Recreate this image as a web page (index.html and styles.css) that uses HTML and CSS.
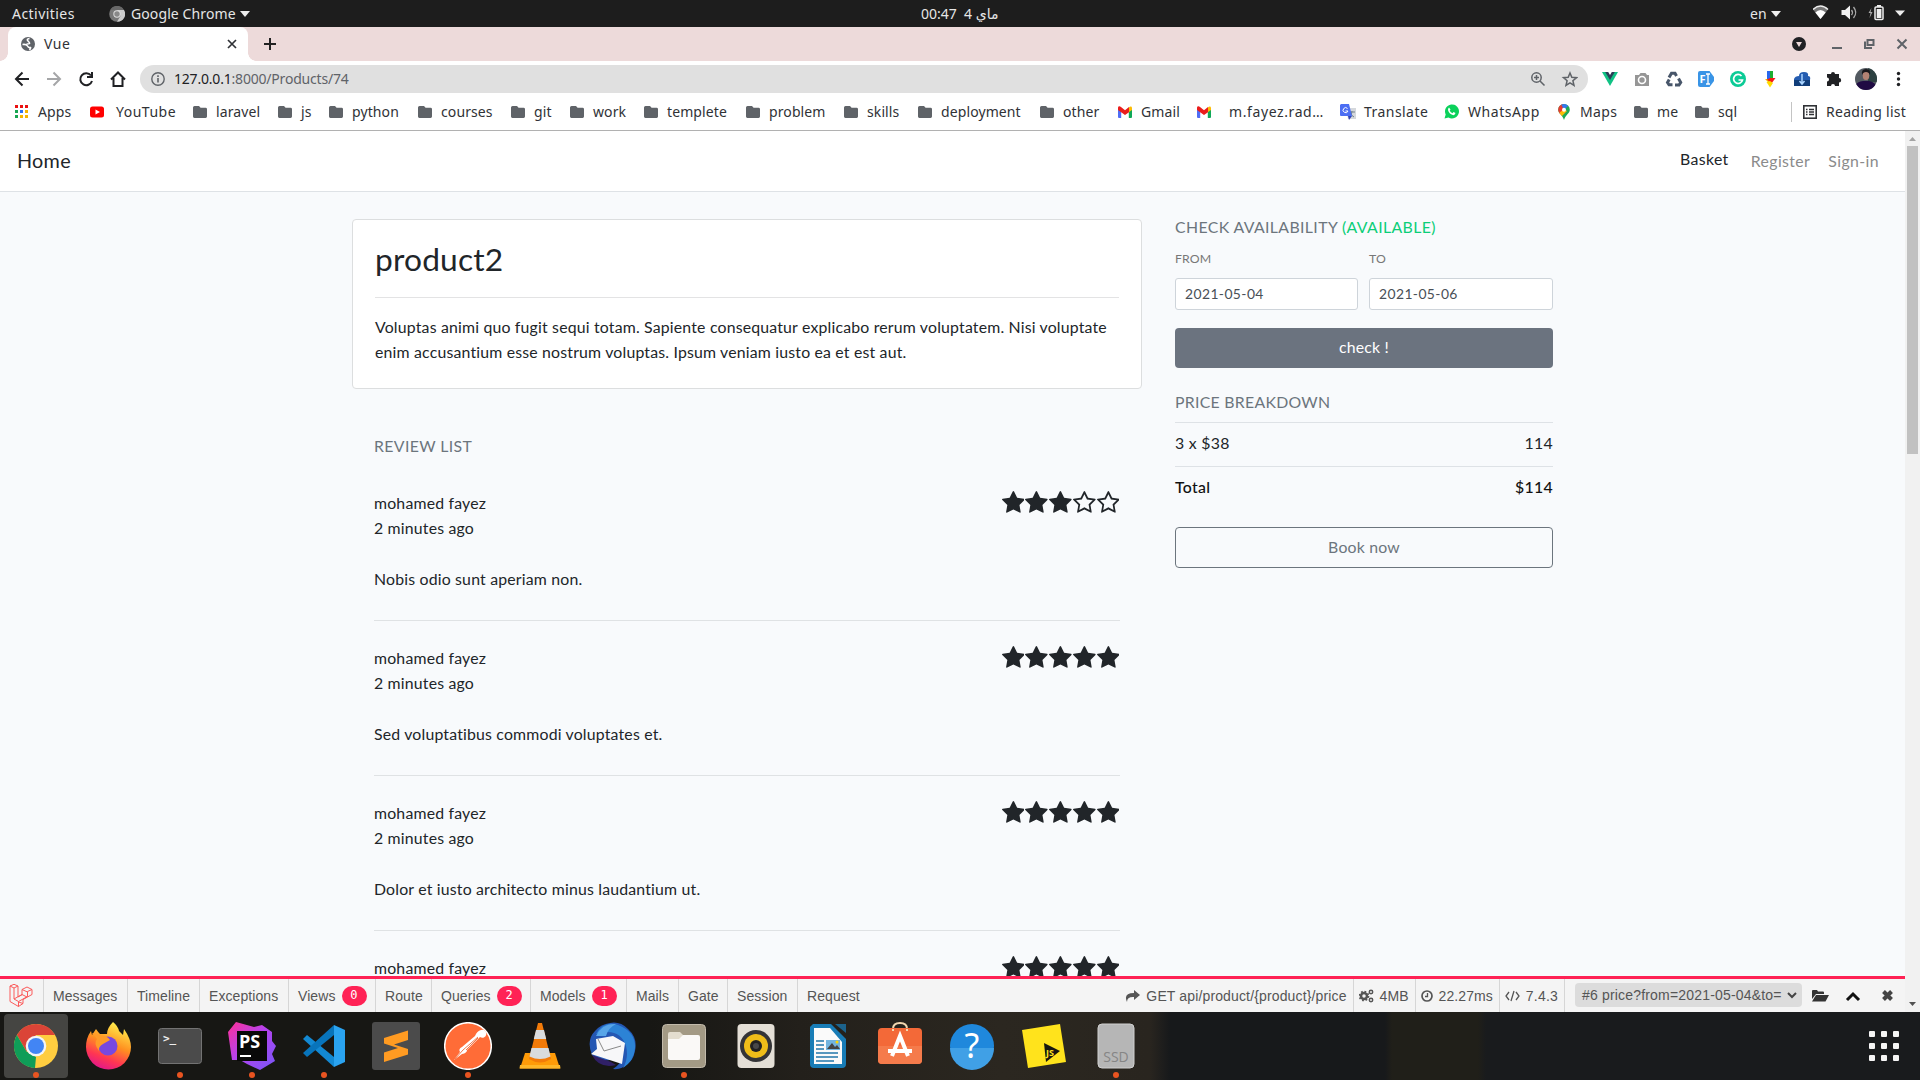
FILE: index.html
```html
<!DOCTYPE html>
<html lang="en">
<head>
<meta charset="utf-8">
<title>Vue</title>
<link rel="stylesheet" href="styles.css">
</head>
<body>
<svg class="sprite" aria-hidden="true">
  <symbol id="folder" viewBox="0 0 14 12"><path fill="#5f6368" d="M1.5 0H6l1.6 1.8h5A1.4 1.4 0 0 1 14 3.2v7.4a1.4 1.4 0 0 1-1.4 1.4H1.4A1.4 1.4 0 0 1 0 10.600V1.500A1.500 1.500 0 0 1 1.500 0z"/></symbol>
  <symbol id="gmail" viewBox="0 0 14 12"><path fill="#4f6df5" d="M0 2l3.200 2.500V12H1a1 1 0 0 1-1-1z"/><path fill="#0fa958" d="M14 2l-3.200 2.500V12H13a1 1 0 0 0 1-1z"/><path fill="#fbbc04" d="M10.800 1.500C12.500-.2 14 .5 14 2v2l-3.200 2.300z"/><path fill="#ea1c1c" d="M0 2C0 .3 1.500-.2 3 1l4 3.200L11 1v5.200L7 9 0 4z"/></symbol>
  <symbol id="star" viewBox="0 0 1664 1600"><path d="M1664 615q0 22-26 48l-363 354 86 500q1 7 1 20 0 21-10.500 35.500T1321 1587q-19 0-40-12l-449-236-449 236q-22 12-40 12-21 0-31.500-14.500T301 1537q0-6 2-20l86-500L25 663Q0 636 0 615q0-37 56-46l502-73L783 41q19-41 49-41t49 41l225 455 502 73q56 9 56 46z"/></symbol>
  <symbol id="star-o" viewBox="0 0 1664 1600"><path fill-rule="evenodd" d="M1137 968l306-297-422-62-189-382-189 382-422 62 306 297-73 421 378-199 377 199zM1664 615q0 22-26 48l-363 354 86 500q1 7 1 20 0 50-41 50-19 0-40-12l-449-236-449 236q-22 12-40 12-21 0-31.500-14.500T301 1537q0-6 2-20l86-500L25 663Q0 636 0 615q0-37 56-46l502-73L783 41q19-41 49-41t49 41l225 455 502 73q56 9 56 46z"/></symbol>
</svg>

<header class="topbar">
  <span class="activities">Activities</span>
  <svg class="app-icon" width="16" height="16" viewBox="0 0 16 16"><circle cx="8" cy="8" r="7.800" fill="#777"/><path d="M8 4h7a7.800 7.800 0 0 1-7 11.800L11.500 10z" fill="#ccc"/><path d="M1.200 4A7.800 7.800 0 0 1 15 4H8z" fill="#686868"/><circle cx="8" cy="8" r="3.700" fill="#ddd"/><circle cx="8" cy="8" r="2.700" fill="#888"/></svg>
  <span class="app-name">Google Chrome</span>
  <svg class="caret" width="10" height="6"><path d="M0 0h10L5 6z" fill="#eee"/></svg>
  <span class="clock">00:47&nbsp; ماي 4</span>
  <span class="lang">en</span>
  <svg class="caret" width="10" height="6"><path d="M0 0h10L5 6z" fill="#eee"/></svg>
  <svg class="tray" width="100" height="20" viewBox="0 0 100 20"><path d="M0 6.500Q7.500-.5 15 6.500L7.500 16z" fill="#777"/><path d="M0 6.500Q7.500-.5 15 6.500" fill="none" stroke="#eee" stroke-width="1.500"/><path d="M2.300 9.500Q7.500 4.500 12.700 9.500L7.500 16z" fill="#fff"/><path d="M28.500 7h3.500l5-4.500v14L32 12h-3.500z" fill="#f2f2f2"/><path d="M38.500 7q2 2.500 0 5M40.500 4q4.500 5.500 0 11" fill="none" stroke="#aaa" stroke-width="1.300"/><path d="M58.500 5l-3 5h2l-1 5 3-6h-2z" fill="#aaa"/><rect x="62" y="4" width="8" height="12.500" rx="1" fill="none" stroke="#eee" stroke-width="1.500"/><path d="M64 2h4v2h-4zM63.700 6h4.700v9h-4.700z" fill="#eee"/><path d="M82 7.500h10l-5 5.500z" fill="#eee"/></svg>
</header>

<div class="tabstrip">
  <div class="tab">
    <svg width="16" height="16" viewBox="0 0 16 16"><circle cx="8" cy="8" r="7" fill="#5f6368"/><path d="M9.500 2.500Q6 3 8 5t1.500 2.500-3 .5" fill="none" stroke="#fff" stroke-width="1.600"/><path d="M2.500 8.500q4-.5 5 1.500t2.500 1.500-.5 2.500" fill="none" stroke="#fff" stroke-width="1.600"/></svg>
    <span>Vue</span>
    <svg class="tab-close" width="10" height="10"><path d="M1 1l8 8M9 1L1 9" stroke="#303236" stroke-width="1.700"/></svg>
  </div>
  <svg class="newtab" width="12" height="12"><path d="M6 0v12M0 6h12" stroke="#222" stroke-width="2"/></svg>
  <svg class="winctl" width="120" height="16" viewBox="0 0 120 16"><circle cx="8" cy="8" r="7" fill="#202124"/><path d="M5 6h6l-3 5z" fill="#eddada"/><path d="M41 12h10" stroke="#5f6368" stroke-width="2"/><path d="M76.500 4h6v5h-6zM74 5.500V12h7" fill="none" stroke="#5f6368" stroke-width="2"/><path d="M106.500 3.500l9 9M115.500 3.500l-9 9" stroke="#5f6368" stroke-width="2"/></svg>
</div>

<div class="toolbar">
  <svg class="navicons" width="118" height="18" viewBox="0 0 118 18"><g fill="none" stroke-width="2"><path d="M15 9H2M8.500 2.500L2 9l6.500 6.500" stroke="#202124"/><path d="M33 9h13M39.500 2.500L46 9l-6.500 6.500" stroke="#a5a6a8"/><path d="M77 5.500A6 6 0 1 0 78 11M78 2v5h-5" stroke="#202124"/><path d="M97 9.500l7-7 7 7M99.500 8v8h9V8" stroke="#202124"/></g></svg>
  <div class="url">
    <svg width="14" height="14"><circle cx="7" cy="7" r="6.200" fill="none" stroke="#5f6368" stroke-width="1.400"/><path d="M7 6v4.500M7 3.300v1.600" stroke="#5f6368" stroke-width="1.600"/></svg>
    <span class="addr"><b>127.0.0.1</b>:8000/Products/74</span>
    <svg class="url-actions" width="48" height="16" viewBox="0 0 48 16"><g fill="none" stroke="#5f6368" stroke-width="1.500"><circle cx="6.500" cy="6.500" r="4.700"/><path d="M10 10l4.500 4.500M4 6.500h5M6.500 4v5"/><path d="M40 2l1.800 4.300 4.700.4-3.600 3 1.100 4.600-4-2.500-4 2.500 1.100-4.600-3.600-3 4.700-.4z"/></g></svg>
  </div>
  <svg class="exts" width="310" height="24" viewBox="0 0 310 24">
    <path d="M0 5h16L8 19z" fill="#10c284"/><path d="M3.200 5h9.600L8 13z" fill="#2c3e57"/><path d="M6.200 5h3.600L8 8z" fill="#fff"/>
    <path d="M33 8h4l1.500-2h5L45 8h2v11H33z" fill="#969696"/><circle cx="40" cy="13" r="3.500" fill="#969696" stroke="#fff" stroke-width="1.600"/>
    <g fill="none" stroke="#48566a" stroke-width="3"><path d="M67 10.500l2.500-4.300h3.500l1.500 2.800"/><path d="M76.500 11.500l2.200 4-1.700 2.500h-4"/><path d="M70.500 17.800H67l-1.500-2.300 1.700-3"/></g>
    <path d="M98 4h9.500l4.500 6v4l-4.500 6H98q-2 0-2-2V6q0-2 2-2z" fill="#3994e6"/><text x="97.500" y="16" class="ext-f">F</text><path d="M104 7h4M106 7v10M104 17h4" stroke="#fff" stroke-width="1.300"/>
    <circle cx="136" cy="12" r="8" fill="#0bcb96"/><path d="M139.500 9a4.500 4.500 0 1 0 1 4h-4" fill="none" stroke="#fff" stroke-width="1.700"/>
    <path d="M165 4h3v9h-3z" fill="#2867ec"/><path d="M168 4h3v8h-3z" fill="#1dad32"/><path d="M163 12h5v4l-2-1z" fill="#f0b400"/><path d="M165 12.500l3-1.500h5.500l-4 5.500z" fill="#f51919"/><path d="M164.500 15l3.500-1 3 2-3 4.500z" fill="#ffdb00"/>
    <path d="M192 12q1-3 5-3 0-4 5-4t4 4q3 0 2 4v6h-16z" fill="#255db1"/><path d="M192 13h16v6h-16z" fill="#103d79"/><path d="M200 7v10M197.500 14l2.500 3 2.500-3" fill="none" stroke="#a9d4ff" stroke-width="1.500"/>
    <path d="M225 7h4a2 2 0 1 1 4 0h4v4a2.200 2.200 0 1 1 0 4.400V19h-4a2 2 0 1 0-4 0h-4v-4.400a2 2 0 1 0 0-4z" fill="#202124"/>
    <clipPath id="av"><circle cx="264" cy="12" r="11"/></clipPath><g clip-path="url(#av)"><path d="M253 1h22v22h-22z" fill="#535a61"/><path d="M266 1h9v14h-9z" fill="#2d4141"/><path d="M252 24q0-9 9-10h6q8 1 8 10z" fill="#200b43"/><ellipse cx="264" cy="8.500" rx="3.300" ry="4.500" fill="#b38273"/><path d="M260 8q-1-6 4-6t4 6q-1-3-4-3t-4 3z" fill="#19171b"/></g>
    <g fill="#202124"><circle cx="296.500" cy="6.500" r="1.700"/><circle cx="296.500" cy="12" r="1.700"/><circle cx="296.500" cy="17.500" r="1.700"/></g>
  </svg>
</div>

<nav class="bookmarks">
  <a><svg width="14" height="14"><path d="M0 0h3v3H0zM5 0h3v3H5zM10 0h3v3h-3z" fill="#ea1111"/><path d="M0 5h3v3H0zM0 10h3v3H0z" fill="#18a552"/><path d="M5 5h3v3H5z" fill="#2d72f5"/><path d="M10 5h3v3h-3zM5 10h3v3H5zM10 10h3v3h-3z" fill="#f6b500"/></svg>Apps</a>
  <a class="wide"><svg width="14" height="12"><rect width="14" height="11" y=".5" rx="2.500" fill="#f00"/><path d="M5.500 3.500v5L10 6z" fill="#fff"/></svg>YouTube</a>
  <a><svg width="14" height="12"><use href="#folder"/></svg>laravel</a>
  <a><svg width="14" height="12"><use href="#folder"/></svg>js</a>
  <a><svg width="14" height="12"><use href="#folder"/></svg>python</a>
  <a><svg width="14" height="12"><use href="#folder"/></svg>courses</a>
  <a><svg width="14" height="12"><use href="#folder"/></svg>git</a>
  <a><svg width="14" height="12"><use href="#folder"/></svg>work</a>
  <a><svg width="14" height="12"><use href="#folder"/></svg>templete</a>
  <a><svg width="14" height="12"><use href="#folder"/></svg>problem</a>
  <a><svg width="14" height="12"><use href="#folder"/></svg>skills</a>
  <a><svg width="14" height="12"><use href="#folder"/></svg>deployment</a>
  <a><svg width="14" height="12"><use href="#folder"/></svg>other</a>
  <a><svg width="14" height="12"><use href="#gmail"/></svg>Gmail</a>
  <a class="wider"><svg width="14" height="12"><use href="#gmail"/></svg>m.fayez.rad…</a>
  <a class="near"><svg width="16" height="16"><path d="M6 4h10v11H8z" fill="#d5d8dc"/><path d="M9 8h6M12 7q0 5-3 6M10 9q2 3 4 4" fill="none" stroke="#71808b"/><path d="M1 0h8l3 12H1a1 1 0 0 1-1-1V1z" fill="#4c6ef3"/><path d="M8 12h4l-3 4z" fill="#3244b7"/><path d="M7.500 4.500A2.500 2.500 0 1 0 8 7H5.500" fill="none" stroke="#fff"/></svg>Translate</a>
  <a class="whatsapp"><svg width="15" height="15"><path d="M.5 14.500l1.200-4A7 7 0 1 1 4.500 13.500z" fill="#0bd15b"/><path d="M5 3.500l1.500 2-.8 1.300q1 1.800 2.800 2.500l1-1.200 2 1q-.5 2.400-2.700 2Q5 10 4 6q0-2 1-2.500z" fill="#fff"/></svg>WhatsApp</a>
  <a class="maps"><svg width="12" height="16"><clipPath id="pin"><path d="M6 0a5.800 5.800 0 0 1 5.800 6C11.800 9 7.500 11 6 16 4.500 11 .2 9 .2 6A5.800 5.800 0 0 1 6 0z"/></clipPath><g clip-path="url(#pin)"><path d="M0 0h12v16H0z" fill="#1da855"/><path d="M0 0h5l2 5-5 6H0z" fill="#e63b2f"/><path d="M3 0h9L6 6z" fill="#3578ed"/><path d="M0 10l6-5 3 2-6 6z" fill="#fbbc04"/></g><circle cx="6" cy="5.800" r="2" fill="#fff"/></svg>Maps</a>
  <a><svg width="14" height="12"><use href="#folder"/></svg>me</a>
  <a><svg width="14" height="12"><use href="#folder"/></svg>sql</a>
  <a class="reading"><svg width="14" height="14"><rect x=".8" y=".8" width="12.400" height="12.400" fill="none" stroke="#303236" stroke-width="1.600"/><path d="M3 4.500h1.500M3 7h1.500M3 9.500h1.500M6 4.500h5M6 7h5M6 9.500h5" stroke="#303236" stroke-width="1.300"/></svg>Reading list</a>
</nav>

<div class="viewport">
  <div class="page">
    <nav class="navbar">
      <span class="brand">Home</span>
      <span class="basket">Basket</span>
      <span class="link register">Register</span>
      <span class="link">Sign-in</span>
    </nav>
    <main class="content">
      <section class="left">
        <article class="card">
          <h2>product2</h2>
          <p>Voluptas animi quo fugit sequi totam. Sapiente consequatur explicabo rerum voluptatem. Nisi voluptate<br>enim accusantium esse nostrum voluptas. Ipsum veniam iusto ea et est aut.</p>
        </article>
        <div class="reviews">
          <h6>REVIEW LIST</h6>
          <div class="review"><div class="meta"><span>mohamed fayez<br>2 minutes ago</span><span class="stars"><svg><use href="#star"/></svg><svg><use href="#star"/></svg><svg><use href="#star"/></svg><svg><use href="#star-o"/></svg><svg><use href="#star-o"/></svg></span></div><p>Nobis odio sunt aperiam non.</p></div>
          <div class="review"><div class="meta"><span>mohamed fayez<br>2 minutes ago</span><span class="stars"><svg><use href="#star"/></svg><svg><use href="#star"/></svg><svg><use href="#star"/></svg><svg><use href="#star"/></svg><svg><use href="#star"/></svg></span></div><p>Sed voluptatibus commodi voluptates et.</p></div>
          <div class="review"><div class="meta"><span>mohamed fayez<br>2 minutes ago</span><span class="stars"><svg><use href="#star"/></svg><svg><use href="#star"/></svg><svg><use href="#star"/></svg><svg><use href="#star"/></svg><svg><use href="#star"/></svg></span></div><p>Dolor et iusto architecto minus laudantium ut.</p></div>
          <div class="review"><div class="meta"><span>mohamed fayez</span><span class="stars"><svg><use href="#star"/></svg><svg><use href="#star"/></svg><svg><use href="#star"/></svg><svg><use href="#star"/></svg><svg><use href="#star"/></svg></span></div></div>
        </div>
      </section>
      <aside class="side">
        <h6>CHECK AVAILABILITY <span class="ok">(AVAILABLE)</span></h6>
        <div class="dates">
          <div><label>FROM</label><div class="input">2021-05-04</div></div>
          <div><label>TO</label><div class="input">2021-05-06</div></div>
        </div>
        <div class="btn solid">check !</div>
        <h6 class="price">PRICE BREAKDOWN</h6>
        <div class="row"><span>3 x $38</span><span>114</span></div>
        <div class="row total"><span>Total</span><span>$114</span></div>
        <div class="btn outline">Book now</div>
      </aside>
    </main>
    <div class="debugbar">
      <span class="logo"><svg width="24" height="24" viewBox="0 0 24 24" fill="none" stroke="#fb5a5a" stroke-width="1"><path d="M1 2l4-1.700L9 2v11l4-2.300V5.500L18 3l5 2.500v5L14 15.500v4L9.500 22.500 1 17.500zM1 2l4 2 4-2M5 4v11l4.500 2.500 9-5V7.500l4.500-2M13 5.500l5.500 2.500M9.500 17.500v5M5 15l8-4.500 5 2.500M9.500 18l4.500 1.500"/></svg></span>
      <span style="width:84px">Messages</span>
      <span style="width:72px">Timeline</span>
      <span style="width:89px">Exceptions</span>
      <span style="width:87px">Views<i>0</i></span>
      <span style="width:56px">Route</span>
      <span style="width:99px">Queries<i>2</i></span>
      <span style="width:96px">Models<i>1</i></span>
      <span style="width:52px">Mails</span>
      <span style="width:49px">Gate</span>
      <span style="width:70px">Session</span>
      <span class="last">Request</span>
      <span class="info route"><svg width="15" height="14" viewBox="0 0 15 14"><path d="M9 1l6 5-6 5V8Q2 7.500 2 13-2 4 9 4z" fill="#555"/></svg>GET api/product/{product}/price</span>
      <span class="info"><svg width="15" height="14" viewBox="0 0 15 14"><g fill="none" stroke="#555"><circle cx="5" cy="7" r="3" stroke-width="2.500"/><circle cx="5" cy="7" r="4.600" stroke-width="1.500" stroke-dasharray="1.800 1.800"/><circle cx="12" cy="3" r="1.700" stroke-width="1.500"/><circle cx="12" cy="11" r="1.700" stroke-width="1.500"/></g></svg>4MB</span>
      <span class="info"><svg width="12" height="12"><circle cx="6" cy="6" r="5" fill="none" stroke="#555" stroke-width="1.700"/><path d="M6.500 3v3.500H4" fill="none" stroke="#555" stroke-width="1.300"/></svg>22.27ms</span>
      <span class="info version"><svg width="15" height="12"><path d="M4 2L1 6l3 4M11 2l3 4-3 4M9 1L6 11" fill="none" stroke="#555" stroke-width="1.300"/></svg>7.4.3</span>
      <span class="select">#6 price?from=2021-05-04&amp;to=<svg width="10" height="7"><path d="M1 1l4 4 4-4" fill="none" stroke="#444" stroke-width="2"/></svg></span>
      <svg class="tools" width="84" height="16" viewBox="0 0 84 16"><path d="M0 11V3q0-1 1-1h4l1 1.500h5q1 0 1 1V6H4z" fill="#333"/><path d="M4 7h13l-3.500 6.500H0z" fill="#333"/><path d="M35 12l6-6 6 6" fill="none" stroke="#111" stroke-width="3"/><path d="M71.500 3.500l8 8M79.500 3.500l-8 8" stroke="#444" stroke-width="4"/></svg>
    </div>
  </div>
  <div class="scrollbar"><svg width="7" height="4"><path d="M0 4h7L3.500 0z" fill="#a3a3a3"/></svg><div class="thumb"></div><svg width="7" height="4"><path d="M0 0h7L3.500 4z" fill="#505050"/></svg></div>
</div>

<footer class="dock">
  <span class="run active"><svg viewBox="0 0 48 48"><circle cx="24" cy="24" r="22" fill="#ffcd40"/><path d="M4.900 13A22 22 0 0 1 43.100 13H24L14.500 29.500z" fill="#db4437"/><path d="M4.900 13l9.600 16.500L24 35l-1 11A22 22 0 0 1 4.900 13z" fill="#0f9d58"/><circle cx="24" cy="24" r="10.300" fill="#f4f4f4"/><circle cx="24" cy="24" r="8" fill="#4285f4"/></svg></span>
  <span><svg viewBox="0 0 48 48"><defs><linearGradient id="ff" x1=".7" y1="0" x2=".3" y2="1"><stop offset="0" stop-color="#fff44f"/><stop offset=".45" stop-color="#ff9020"/><stop offset=".75" stop-color="#ff3652"/><stop offset="1" stop-color="#e01590"/></linearGradient></defs><path d="M29 0q5 4 6 9l4 4 1-6q7 10 7 18A22.500 22.500 0 0 1 2 25q0-9 5-16l1 4 4-6q2 3 4 5h7q0-6 6-12z" fill="url(#ff)"/><circle cx="24" cy="24" r="9.500" fill="#7748e0"/><path d="M8 11q7 1 9 3 5-1 9 4l-7 4q-5 3-4 7-6-8-2-12z" fill="#ff9b28"/></svg></span>
  <span class="run"><svg viewBox="0 0 48 48"><rect x="2.500" y="6.500" width="43" height="35" rx="3" fill="#4b4b4b" stroke="#737373"/><text x="7" y="20" class="term">&gt;_</text></svg></span>
  <span class="run"><svg viewBox="0 0 48 48"><defs><linearGradient id="ps" x1="0" y1="0" x2="1" y2="1"><stop offset="0" stop-color="#ff3096"/><stop offset=".45" stop-color="#b642ee"/><stop offset="1" stop-color="#7658fa"/></linearGradient></defs><path d="M0 10L8 0l18 5 8-2 10 7 0 9 4 5-4 8 3 7-15 9-13-6-7-4H4z" fill="url(#ps)"/><path d="M9 9h30v30H9z" fill="#090909"/><text x="11" y="25.500" class="pstext">PS</text><path d="M12 33h11v2H12z" fill="#fff"/></svg></span>
  <span class="run"><svg viewBox="0 0 48 48"><path d="M3 17l4-4 27 22v10z" fill="#1389d3"/><path d="M3 31l4 4 27-22V3z" fill="#0874bb"/><path d="M34 3l11 5v32l-11 5z" fill="#2aa3f0"/></svg></span>
  <span><svg viewBox="0 0 48 48"><rect width="48" height="48" rx="3" fill="#4b4b4b"/><path d="M12 16l24-7.500V18l-14 4.500L36 27v5.500L12 40v-9.500L26 26l-14-4.500z" fill="#ff9b22"/></svg></span>
  <span class="run"><svg viewBox="0 0 48 48"><circle cx="24" cy="24" r="23.300" fill="#ff6c37" stroke="#fff" stroke-width="1.500"/><path d="M37 8a4 4 0 1 1-1 7L23 28q0 3-5 4l-8 6 6-8q-2-3 2-5l13-11q2-5 6-6z" fill="#fff"/><path d="M34 15L19 28l-8 9M22 28l12-12" fill="none" stroke="#f07b4f"/></svg></span>
  <span><svg viewBox="0 0 48 48"><path d="M9 31h30l5 15.500H4z" fill="#ff9b08"/><path d="M22 1h4l9 36q-11 7-22 0z" fill="#f37b09"/><path d="M20 8h8l2.200 9H17.800zM15.500 26h17l2 8.500q-10.500 5-21 0z" fill="#d9dcdf"/><path d="M4 43h40l.5 3.500h-41z" fill="#ffb628"/></svg></span>
  <span><svg viewBox="0 0 48 48"><path d="M22 1q10-2 18 6 10 9 7 22-2 10-8 13-5 6-14 5 9-6 10-14Q14 44 4 33-2 18 7 9q6-7 15-8z" fill="#2457b3"/><path d="M8 12Q16-2 30 3q18 7 17 23-1 13-12 20 6-10 3-22Q33 9 18 10z" fill="#2c83d6"/><path d="M8 14q6-13 20-12-8 4-10 12z" fill="#57a5e8"/><path d="M8 17l17-3 12 7-3 21-31-10 6-5z" fill="#f7f7f9"/><path d="M10 17l6 12 17-5" fill="none" stroke="#888"/><path d="M4 33l19 7 5 3q-17 4-24-10z" fill="#302066"/></svg></span>
  <span class="run"><svg viewBox="0 0 48 48"><rect x="2.500" y="2.500" width="43" height="43" rx="4" fill="#a39a85" stroke="#c2baab"/><path d="M8 12q0-2 2-2h10l3 3v8H8z" fill="#e3ddcf"/><path d="M8 17h11l4-4h15q2 0 2 2v21q0 2-2 2H10q-2 0-2-2z" fill="#faf9f7"/></svg></span>
  <span><svg viewBox="0 0 48 48"><rect x="5.500" y="2" width="37" height="44" rx="4" fill="#e4dfd6"/><circle cx="24" cy="24" r="16" fill="#343437"/><circle cx="24" cy="24" r="12" fill="#efbd19"/><circle cx="24" cy="24" r="6" fill="#222"/><circle cx="24" cy="24" r="3" fill="#484848"/></svg></span>
  <span><svg viewBox="0 0 48 48"><path d="M9 2h18l15 15v25q0 4-4 4H10q-4 0-4-4V5z" fill="#187cb6"/><path d="M31 2h11v9z" fill="#1c638c"/><path d="M10 6h16l12 14v22H10z" fill="#fafafa"/><path d="M12 19h8M12 23h8M12 27h8M12 31h22M12 35h22M12 39h18" stroke="#2277aa" stroke-width="1.700"/><path d="M22 18h14v10H22z" fill="#72b4df"/><path d="M23 27l5-6 3 4 2-2 3 4z" fill="#444"/><circle cx="33" cy="20" r="1.500" fill="#ffd600"/></svg></span>
  <span><svg viewBox="0 0 48 48"><path d="M17 10V7q0-6 7-6t7 6v3" fill="none" stroke="#f2d7b0" stroke-width="2"/><rect x="2" y="6" width="44" height="36" rx="4" fill="#f36938"/><path d="M2 24h44v14q0 4-4 4H6q-4 0-4-4z" fill="#f57b4b"/><path d="M17 9V7M31 9V7" stroke="#f2d7b0" stroke-width="2"/><path d="M16 34l8-20 8 20M12 29h24" fill="none" stroke="#fff" stroke-width="4"/></svg></span>
  <span><svg viewBox="0 0 48 48"><circle cx="24" cy="24" r="22" fill="#1f88dc"/><path d="M2 26h44a22 22 0 0 1-44 0z" fill="#40a0e6"/><text x="24" y="36" text-anchor="middle" class="help">?</text></svg></span>
  <span><svg viewBox="0 0 48 48"><path d="M2 8l38-6 6 38-38 6z" fill="#ffe31c"/><path d="M24 21l16 8-14 11z" fill="#16160f"/><text x="26" y="34" class="jstext">JS</text></svg></span>
  <span class="run"><svg viewBox="0 0 48 48"><rect x="6" y="2" width="36" height="44" rx="4" fill="#b6b6b6" stroke="#d0d0d0"/><text x="24" y="40" text-anchor="middle" class="ssd">SSD</text></svg></span>
  <svg class="grid" width="30" height="30" viewBox="0 0 30 30" fill="#f5f5f5"><rect width="6" height="6" rx="1"/><rect x="12" width="6" height="6" rx="1"/><rect x="24" width="6" height="6" rx="1"/><rect y="12" width="6" height="6" rx="1"/><rect x="12" y="12" width="6" height="6" rx="1"/><rect x="24" y="12" width="6" height="6" rx="1"/><rect y="24" width="6" height="6" rx="1"/><rect x="12" y="24" width="6" height="6" rx="1"/><rect x="24" y="24" width="6" height="6" rx="1"/></svg>
</footer>
</body>
</html>
```
FILE: styles.css
```css
* { box-sizing: border-box; }
body { margin: 0; width: 1920px; height: 1080px; overflow: hidden; display: flex; flex-direction: column; font-family: "Noto Sans", "DejaVu Sans", sans-serif; }
svg { display: block; flex: none; }
h2, h6, p { margin: 0; font-weight: 400; }
.sprite { width: 0; height: 0; flex: none; }

.topbar { height: 27px; flex: none; background: #1d1d1d; color: #e6e6e6; display: flex; align-items: center; font-size: 14px; white-space: nowrap; }
.activities { margin-left: 12px; width: 97px; letter-spacing: .45px; }
.app-name { margin-left: 6px; width: 109px; letter-spacing: .1px; }
.clock { margin-left: 671px; width: 80px; }
.lang { margin-left: 749px; width: 21px; }
.tray { margin-left: 32px; margin-top: -2px; }

.tabstrip { height: 34px; flex: none; background: #eddada; display: flex; align-items: center; }
.tab { margin-left: 8px; width: 240px; height: 34px; background: #fff; border-radius: 8px 8px 0 0; display: flex; align-items: center; padding: 0 11px 0 12px; font-size: 14px; color: #303236; position: relative; }
.tab span { margin: -2px 0 0 8px; flex: 1; letter-spacing: .5px; }
.tab::before, .tab::after { content: ""; position: absolute; bottom: 0; width: 8px; height: 8px; }
.tab::before { left: -8px; background: radial-gradient(circle at 0 0, transparent 7.5px, #fff 8px); }
.tab::after { right: -8px; background: radial-gradient(circle at 100% 0, transparent 7.5px, #fff 8px); }
.newtab { margin-left: 16px; }
.winctl { margin-left: auto; margin-right: 9px; }

.toolbar { height: 36px; flex: none; background: #fff; display: flex; align-items: center; }
.navicons { margin-left: 14px; margin-right: 8px; }
.url { width: 1448px; height: 28px; border-radius: 14px; background: #e0e0e0; display: flex; align-items: center; padding: 0 11px; font-size: 14px; }
.addr { margin: -2px 0 0 9px; flex: 1; color: #5f6368; letter-spacing: -.2px; }
.addr b { font-weight: 400; color: #202124; }
.url-actions { margin-right: -1px; }
.exts { margin-left: 14px; }
.ext-f { font: bold 11px "Noto Sans", sans-serif; fill: #fff; }

.bookmarks { height: 34px; flex: none; background: #fff; border-bottom: 1px solid #b1b1b1; padding: 0 0 4px 15px; display: grid; grid-template-columns: 75px 103px 85px 51px 89px 93px 59px 74px 102px 98px 74px 122px 78px 79px 143px 104px 114px 76px 61px 96px 129px; align-items: center; font-size: 14px; letter-spacing: .1px; color: #303236; white-space: nowrap; }
.bookmarks a { display: flex; align-items: center; gap: 9px; height: 20px; }
.bookmarks .wide { gap: 12px; letter-spacing: .5px; }
.bookmarks .wider { gap: 18px; letter-spacing: .6px; }
.bookmarks .near { gap: 8px; letter-spacing: .45px; }
.bookmarks .whatsapp { letter-spacing: .55px; }
.bookmarks .maps { gap: 10px; letter-spacing: .35px; }
.bookmarks .reading { border-left: 1px solid #c4c4c4; padding-left: 11px; letter-spacing: .3px; }

.viewport { flex: 1; min-height: 0; display: flex; }
.page { width: 1905px; display: flex; flex-direction: column; background: #f8fafc; font-family: Lato, "Noto Sans", sans-serif; font-size: 15.84px; line-height: 25.34px; letter-spacing: .185px; color: #212529; }
.navbar { height: 61px; flex: none; background: #fff; border-bottom: 1px solid #dee2e6; display: flex; align-items: center; padding: 0 26px 1px 17px; }
.brand { font-size: 19.8px; flex: 1; letter-spacing: .3px; }
.basket { margin-right: 22px; margin-top: -4px; letter-spacing: .4px; }
.link { color: #8b8b8b; letter-spacing: .4px; }
.register { margin-right: 18px; }

.content { flex: 1; min-height: 0; overflow: hidden; display: flex; align-items: flex-start; padding: 27px 0 0 352px; }
.left { width: 790px; margin-right: 33px; }
.card { height: 170px; background: #fff; border: 1px solid #dcdedf; border-radius: 4px; padding: 20px 22px; }
.card h2 { font-size: 31.7px; line-height: 38px; height: 58px; border-bottom: 1px solid #e3e3e4; }
.card p { padding-top: 16px; white-space: nowrap; line-height: 25px; }
.reviews { padding: 44px 22px 0 22px; }
h6 { font-size: 15.84px; line-height: 25px; color: #6c757d; letter-spacing: .38px; }
.review { height: 155px; border-bottom: 1px solid #dfe2e4; padding-top: 24px; line-height: 25px; }
.reviews h6 { margin-bottom: 8px; }
.meta { display: flex; justify-content: space-between; }
.stars { display: flex; gap: 1px; width: 118.500px; margin-top: 1px; }
.stars svg { width: 22.800px; height: 22px; fill: #212529; }
.review p { padding-top: 26px; }

.side { width: 378px; white-space: nowrap; }
.side h6 { margin-top: -5px; }
.side .ok { color: #0bce78; }
.dates { display: grid; grid-template-columns: 183px 184px; gap: 11px; }
label { display: block; font-size: 12.3px; line-height: 19px; letter-spacing: .1px; color: #777; padding-top: 10px; height: 39px; }
.input { height: 32px; border: 1px solid #ced4da; border-radius: 3px; background: #fff; padding: 0 9px; font-size: 13.86px; line-height: 30px; letter-spacing: .42px; color: #495057; }
.btn { height: 41px; border-radius: 4px; text-align: center; line-height: 37px; }
.solid { background: #6b737f; color: #fff; margin-top: 18px; height: 40px; }
.side .price { margin-top: 21px; height: 33px; letter-spacing: .28px; }
.row { height: 44px; border-top: 1px solid #dee2e6; display: flex; justify-content: space-between; padding-top: 7px; letter-spacing: .3px; }
.total { font-weight: 500; color: #111; }
.outline { border: 1px solid #6c757d; color: #6c757d; margin-top: 17px; }

.debugbar { height: 36px; flex: none; background: #f4f4f4; border-top: 3px solid #ff2255; display: flex; font: 14px/34px "Liberation Sans", Arial, sans-serif; letter-spacing: .08px; color: #555; white-space: nowrap; }
.debugbar > span { flex: none; border-right: 1px solid #d6d6d6; padding-left: 9px; display: flex; align-items: center; }
.debugbar .logo { width: 44px; }
.debugbar i { margin-left: 6px; width: 25px; height: 20px; border-radius: 10px; background: #ff2255; color: #fff; font: 12px/18px "DejaVu Sans Mono", monospace; text-align: center; }
.debugbar .last { border: 0; margin-right: auto; }
.debugbar .info { padding: 0 6px 0 5px; gap: 6px; }
.debugbar .route { letter-spacing: .14px; }
.debugbar .version { letter-spacing: .2px; }
.debugbar .select { border: 0; margin: 4px 10px 5px; width: 227px; height: 24px; border-radius: 4px; background: #dcdcdc; padding: 0 5px 0 7px; justify-content: space-between; letter-spacing: .18px; }
.tools { margin: 9px 9px 0 0; }
.scrollbar { width: 15px; background: #f1f1f1; display: flex; flex-direction: column; align-items: center; padding: 6px 0; }
.thumb { width: 11px; height: 308px; background: #c1c1c1; margin: 5px 0 auto; }

.dock { height: 68px; flex: none; display: flex; align-items: center; background: linear-gradient(90deg, #171714 0, #171714 650px, #23201b 800px, #2b2720 1000px, #29251f 1150px, #17191b 1170px, #17191b 1385px, #201f19 1392px, #201f19 1478px, #191b1d 1486px); }
.dock span { width: 72px; height: 68px; display: flex; align-items: center; justify-content: center; position: relative; }
.dock span svg { width: 48px; height: 48px; z-index: 1; }
.dock .active::before { content: ""; position: absolute; left: 4px; top: 2px; width: 64px; height: 64px; border-radius: 4px; background: #454542; }
.dock .run::after { content: ""; position: absolute; left: 33px; bottom: 2px; width: 6px; height: 6px; border-radius: 50%; background: #e95420; }
.grid { margin-left: auto; margin-right: 21px; }
.term { font: bold 11px "DejaVu Sans Mono", monospace; fill: #eee; }
.pstext { font: bold 18px "Open Sans", sans-serif; fill: #fff; }
.help { font: 34px "Noto Sans", sans-serif; fill: #fff; }
.jstext { font: bold 9px "Noto Sans", sans-serif; fill: #ffe31c; }
.ssd { font: 14px "Open Sans", sans-serif; fill: #858585; }
```
